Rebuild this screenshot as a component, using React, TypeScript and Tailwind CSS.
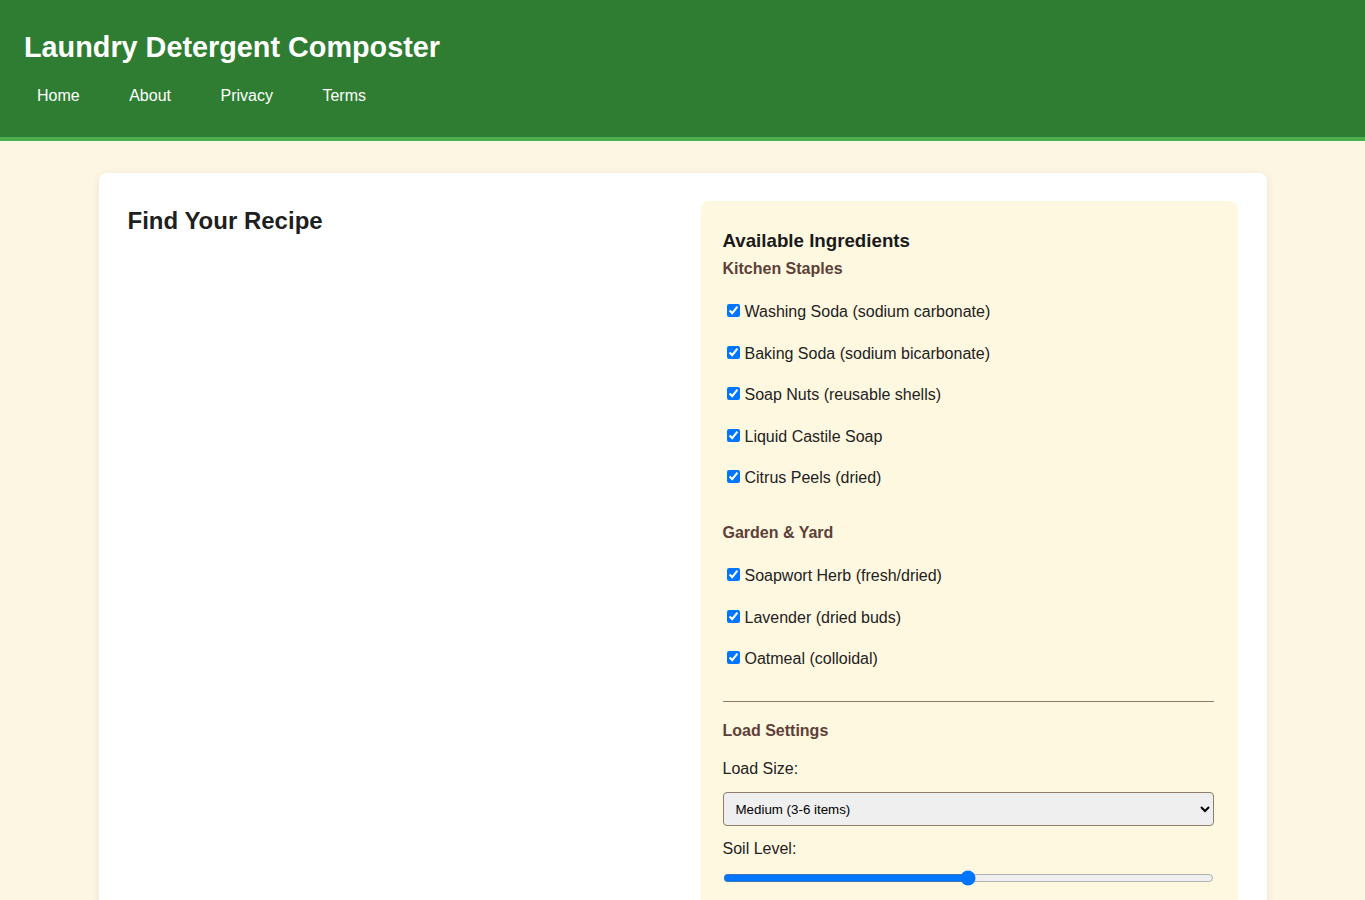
import { useState } from 'react'

const kitchen = [
  'Washing Soda (sodium carbonate)',
  'Baking Soda (sodium bicarbonate)',
  'Soap Nuts (reusable shells)',
  'Liquid Castile Soap',
  'Citrus Peels (dried)',
]

const garden = [
  'Soapwort Herb (fresh/dried)',
  'Lavender (dried buds)',
  'Oatmeal (colloidal)',
]

function Ingredient({ label }: { label: string }) {
  const [checked, setChecked] = useState(true)
  return (
    <label className="flex h-[41.5px] items-center text-[16px] leading-[18px] text-[#222]">
      <input
        type="checkbox"
        checked={checked}
        onChange={() => setChecked(!checked)}
        className="mb-[3px] ml-1 mr-[5px] h-[13px] w-[13px]"
      />
      {label}
    </label>
  )
}

export default function App() {
  const [load, setLoad] = useState('medium')
  const [soil, setSoil] = useState(50)

  return (
    <div className="min-h-screen bg-[#fdf6e3] font-['Liberation_Sans',Arial,sans-serif]">
      {/* Header */}
      <header className="border-b-4 border-[#4caf50] bg-[#2e7d32] px-6 pb-[32px] pt-[31px] text-white">
        <h1 className="text-[28.8px] font-bold leading-[33px]">Laundry Detergent Composter</h1>
        <nav className="ml-px mt-[23px] flex gap-[25.5px] text-[16px] leading-[18px]">
          {['Home', 'About', 'Privacy', 'Terms'].map((item) => (
            <a key={item} href="#" className="px-3">
              {item}
            </a>
          ))}
        </nav>
      </header>

      <main className="px-4 pb-8 pt-8">
        <div className="mx-auto max-w-[1168px] rounded-lg bg-white px-[29px] py-7 shadow-[0_2px_10px_rgba(0,0,0,0.08)]">
          <div className="grid grid-cols-2 gap-9">
            {/* Left column */}
            <div>
              <h2 className="mt-[6px] text-[24px] font-bold leading-[28px] text-[#1f1f1f]">Find Your Recipe</h2>
            </div>

            {/* Ingredients panel */}
            <div className="rounded-lg bg-[#fff8e1] pb-8 pl-[22px] pr-[24px] pt-[29px]">
              <h3 className="text-[18.72px] font-bold leading-[21.5px] text-[#1a1a1a]">Available Ingredients</h3>
              <h4 className="mt-[8px] text-[16px] font-bold leading-[18.4px] text-[#5d4037]">Kitchen Staples</h4>
              <div className="mt-[13.5px]">
                {kitchen.map((k) => (
                  <Ingredient key={k} label={k} />
                ))}
              </div>

              <h4 className="mt-[25.5px] text-[16px] font-bold leading-[18.4px] text-[#5d4037]">Garden &amp; Yard</h4>
              <div className="mt-[12.5px]">
                {garden.map((g) => (
                  <Ingredient key={g} label={g} />
                ))}
              </div>

              <hr className="mt-[21px] border-t border-[#8d7d6a]" />

              <h4 className="mt-[20px] text-[16px] font-bold leading-[18.4px] text-[#5d4037]">Load Settings</h4>
              <label className="mt-[19.6px] block text-[16px] leading-[18.4px] text-[#222]">Load Size:</label>
              <select
                value={load}
                onChange={(e) => setLoad(e.target.value)}
                className="mt-[14px] block h-[34px] w-full rounded border border-[#8d7d6a] bg-[#efefef] px-[8px] text-[13.33px] text-black"
              >
                <option value="small">Small (1-2 items)</option>
                <option value="medium">Medium (3-6 items)</option>
                <option value="large">Large (7+ items)</option>
              </select>
              <label className="mt-[14px] block text-[16px] leading-[18.4px] text-[#222]">Soil Level:</label>
              <input
                type="range"
                min={0}
                max={100}
                value={soil}
                onChange={(e) => setSoil(Number(e.target.value))}
                className="mt-[11px] block h-4 w-full"
              />
            </div>
          </div>
        </div>
      </main>
    </div>
  )
}
